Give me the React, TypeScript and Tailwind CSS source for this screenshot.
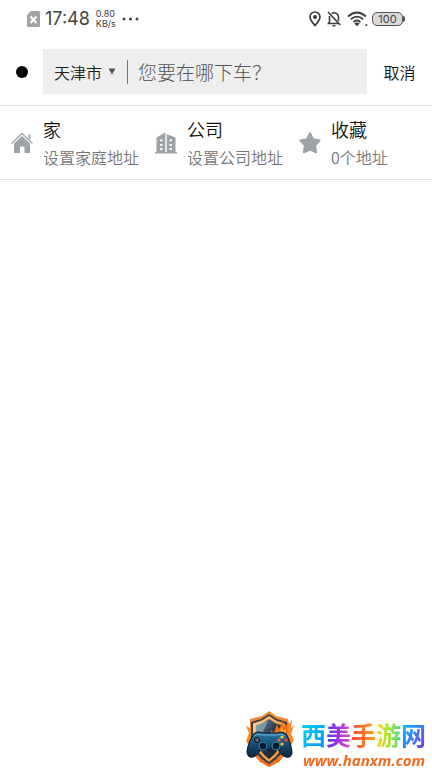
import React from 'react';

const cjk = "font-['Noto_Sans_CJK_SC',sans-serif]";

function StatusBar() {
  return (
    <header className="flex h-[38px] items-center justify-between pl-[27px] pr-[27px] text-[#444]">
      <div className="flex items-center">
        <svg width="13" height="16" viewBox="0 0 13 16" aria-hidden="true">
          <path d="M4 0H11.5Q13 0 13 1.5V14.5Q13 16 11.5 16H1.5Q0 16 0 14.5V4Z" fill="#a3a3a3" />
          <path d="M3.500 5.500L9.500 12M9.500 5.500L3.500 12" stroke="#fff" strokeWidth="2" />
        </svg>
        <span className="ml-[5px] font-['Inter',sans-serif] text-[18px] leading-5">17:48</span>
        <span className="ml-[6px] flex flex-col font-['Inter',sans-serif] text-[9px] leading-[10px]">
          <span>0.80</span>
          <span>KB/s</span>
        </span>
        <svg className="ml-[6px]" width="17" height="4" viewBox="0 0 17 4" fill="#444" aria-hidden="true">
          <circle cx="2" cy="2" r="1.5" />
          <circle cx="8.5" cy="2" r="1.5" />
          <circle cx="15" cy="2" r="1.5" />
        </svg>
      </div>
      <div className="flex items-center">
        <svg width="12" height="16" viewBox="0 0 12 16" fill="none" aria-hidden="true">
          <path d="M6 14.5C3.5 11.5 1 9 1 6A5 5 0 0 1 11 6C11 9 8.500 11.500 6 14.500Z" stroke="#3c3c3c" strokeWidth="1.7" />
          <circle cx="6" cy="6" r="2" fill="#3c3c3c" />
        </svg>
        <svg className="ml-[6px]" width="14" height="16" viewBox="0 0 14 16" fill="none" stroke="#3c3c3c" strokeWidth="1.6" aria-hidden="true">
          <path d="M4.500 2.500C8 .5 11.500 3 11.500 6V10M2.500 5V11L1.500 12.500H11M5.500 14.700H8.500M1 1L13.300 14" />
        </svg>
        <svg className="ml-[6px]" width="21" height="16" viewBox="0 0 21 16" fill="none" stroke="#3c3c3c" strokeWidth="1.8" aria-hidden="true">
          <path d="M1 5.500Q10 -2.500 19 5.500M3.800 8.300Q10 3 16.200 8.300M6.500 11Q10 8 13.500 11" />
          <path d="M7.300 12.500Q10 10.500 12.700 12.500L10 15.200Z" fill="#3c3c3c" stroke="none" />
          <circle cx="19.300" cy="14" r="1" fill="#3c3c3c" stroke="none" />
        </svg>
        <span className="ml-[4px] flex h-[14px] w-[31px] items-center justify-center rounded-[5px] border border-[#555] bg-[#d9d9d9] font-['Inter',sans-serif] text-[11px] leading-3">
          100
        </span>
        <span className="h-[6px] w-[2px] rounded-r-sm bg-[#555]" />
      </div>
    </header>
  );
}

function SearchBar() {
  return (
    <form className="flex items-center border-b border-[#e2e2e2] pt-[11px] pb-[11px]">
      <span className="flex w-[43px] shrink-0 justify-center">
        <span className="size-3 rounded-full bg-black" />
      </span>
      <div className="flex h-[45px] min-w-0 flex-1 items-center bg-[#eee] pl-[11px]">
        <label className="flex shrink-0 items-center">
          <select aria-label="城市" className="w-[54px] appearance-none bg-transparent text-[16px] leading-6 font-[350] text-[#222] outline-none">
            <option>天津市</option>
          </select>
          <svg width="8" height="7" viewBox="0 0 8 7" aria-hidden="true">
            <path d="M0.500 0.500H7.500L4 6.500Z" fill="#555" />
          </svg>
        </label>
        <span className="ml-[11px] h-6 w-px shrink-0 bg-[#777]" />
        <input
          type="text"
          aria-label="目的地"
          placeholder="您要在哪下车？"
          className="ml-[10px] min-w-0 flex-1 bg-transparent text-[19px] leading-7 font-light text-[#333] outline-none placeholder:text-[#555]"
        />
      </div>
      <button type="button" className="w-[65px] shrink-0 text-[16px] leading-6 font-[350] text-[#111]">
        取消
      </button>
    </form>
  );
}

function HomeIcon() {
  return (
    <svg width="22" height="22" viewBox="0 0 22 22" aria-hidden="true">
      <path d="M0.500 11.500L11 1.500L21.500 11.500" fill="none" stroke="#9da3a8" strokeWidth="1.300" />
      <path d="M17.500 2.500H19.500V8L17.500 6Z" fill="#9da3a8" />
      <path d="M3 11.500L11 4L19 11.500V20.500Q19 21 18.500 21H13.500V15.500Q13.500 14.500 12.500 14.500H10Q9 14.500 9 15.500V21H3.500Q3 21 3 20.500Z" fill="#9da3a8" />
    </svg>
  );
}

function OfficeIcon() {
  return (
    <svg width="22" height="22" viewBox="0 0 22 22" aria-hidden="true">
      <path d="M0 20H1.500V5.500L10.300 0.500V20H11.700V2L20.500 5.500V20H22V21.500H0Z" fill="#9da3a8" />
      <path d="M5 7.500H7.500V9.200H5ZM5 12H7.500V13.700H5ZM5 16.200H7.500V17.900H5ZM14.500 7.500H17V9.200H14.500ZM14.500 12H17V13.700H14.500ZM14.500 16.200H17V17.900H14.500Z" fill="#fff" />
    </svg>
  );
}

function StarIcon() {
  return (
    <svg width="22" height="22" viewBox="0 0 22 22" aria-hidden="true">
      <path
        d="M11 1.500L14 7.300L20.500 8.500L16 13.500L17 20.200L11 17.500L5 20.200L6 13.500L1.500 8.500L8 7.300Z"
        fill="#9da3a8"
        stroke="#9da3a8"
        strokeWidth="2.200"
        strokeLinejoin="round"
      />
    </svg>
  );
}

const places = [
  { title: '家', note: '设置家庭地址', icon: <HomeIcon /> },
  { title: '公司', note: '设置公司地址', icon: <OfficeIcon /> },
  { title: '收藏', note: '0个地址', icon: <StarIcon /> },
];

function Places() {
  return (
    <nav className="grid grid-cols-3 border-b border-[#e2e2e2]">
      {places.map((place) => (
        <button key={place.title} type="button" className="flex h-[73px] items-center pl-[11px] text-left">
          {place.icon}
          <span className="ml-[10px] flex flex-col whitespace-nowrap">
            <span className="text-[18px] leading-7 font-[350] text-[#111]">{place.title}</span>
            <span className="text-[16px] leading-7 font-[350] text-[#777]">{place.note}</span>
          </span>
        </button>
      ))}
    </nav>
  );
}

function ShieldLogo() {
  return (
    <svg width="50" height="58" viewBox="0 0 50 58" aria-hidden="true">
      <defs>
        <linearGradient id="flame" x1="0" y1="0" x2="0" y2="1">
          <stop offset="0" stopColor="#e98a35" />
          <stop offset="0.500" stopColor="#ff8a24" />
          <stop offset="1" stopColor="#f36a18" />
        </linearGradient>
        <linearGradient id="rim" x1="0" y1="0" x2="1" y2="1">
          <stop offset="0" stopColor="#ffd49a" />
          <stop offset="0.500" stopColor="#f7a04a" />
          <stop offset="1" stopColor="#ff9d2e" />
        </linearGradient>
        <linearGradient id="steel" x1="0" y1="0" x2="1" y2="1">
          <stop offset="0" stopColor="#7593a6" />
          <stop offset="0.500" stopColor="#22384a" />
          <stop offset="1" stopColor="#0d1622" />
        </linearGradient>
        <linearGradient id="pad" x1="0" y1="0" x2="0" y2="1">
          <stop offset="0" stopColor="#2d7fac" />
          <stop offset="0.500" stopColor="#174b70" />
          <stop offset="1" stopColor="#0c2440" />
        </linearGradient>
      </defs>
      <path d="M24 1L31 6L43 9L44 14L47 10L46 18L49 15L46 24L49 30L45 37L46 42L39 46L34 52L24 57L15 52L10 46L3 43L5 37L1 31L4 23L1 16L5 18L5 9L17 6Z" fill="url(#flame)" />
      <path d="M24 4L32 9L42 12V29Q40 45 24 54Q8 45 6 29V12L16 9Z" fill="#3a3f45" />
      <path d="M24 6L31 10.500L40 13.500V29Q37 43 24 52Q11 43 8 29V13.500L17 10.500Z" fill="url(#rim)" />
      <path d="M24 9L30 13L37 15.500V29Q35 41 24 49Q13 41 11 29V15.500L18 13Z" fill="url(#steel)" />
      <path d="M11 16L23 11L15 28H11Z" fill="#9ab5c2" opacity=".6" />
      <path d="M25 27L26 20L29 23L32 14L34 19L38 11L39 17L43 13L42 28Z" fill="#f9680d" />
      <path d="M30 27L32 21L34 24L37 16L38 21L41 19L40 28Z" fill="#ffbe3b" />
      <path d="M9 24Q12 21 17 23H32Q37 21 41 24Q46 32 47 43Q46 48 41 47Q37 46 33 39H16Q12 46 8 47Q3 48 2 42Q3 32 9 24Z" fill="url(#pad)" stroke="#0c1e30" strokeWidth="1.200" />
      <path d="M9 26Q12 23 17 25H32Q37 23 40 26" fill="none" stroke="#5fb0d6" />
      <path d="M9 30H15M12 27V33" stroke="#0b2034" strokeWidth="3" />
      <path d="M10 30H14M12 28V32" stroke="#8a7f84" strokeWidth="1.200" />
      <circle cx="18" cy="36" r="4" fill="#081a2b" stroke="#3b83ad" />
      <circle cx="31" cy="36" r="4" fill="#081a2b" stroke="#3b83ad" />
      <circle cx="37" cy="27" r="1.600" fill="#ffca2b" />
      <circle cx="41" cy="30" r="1.600" fill="#f44336" />
      <circle cx="34" cy="30" r="1.600" fill="#ff6a3a" />
      <circle cx="37" cy="34" r="1.600" fill="#ffca2b" />
    </svg>
  );
}

function Watermark() {
  return (
    <aside className="fixed right-[6px] bottom-0 flex items-end">
      <ShieldLogo />
      <span className="ml-[6px] flex flex-col">
        <span className="flex text-[25px] leading-9 font-bold">
          <span className="bg-linear-to-br from-[#13e4ee] to-[#1685ff] bg-clip-text text-transparent">西</span>
          <span className="bg-linear-to-r from-[#4a38f0] via-[#a02ce8] to-[#f044b8] bg-clip-text text-transparent">美</span>
          <span className="bg-linear-to-r from-[#ff3e3c] to-[#ff9c18] bg-clip-text text-transparent">手</span>
          <span className="bg-linear-to-r from-[#ffd21a] via-[#a5e52a] to-[#2adc78] bg-clip-text text-transparent">游</span>
          <span className="bg-linear-to-br from-[#12dff0] via-[#2a80ff] to-[#7a16d8] bg-clip-text text-transparent">网</span>
        </span>
        <a href="#" className="ml-[2px] font-['Open_Sans',sans-serif] text-[15px] leading-4 font-bold text-[#f26a21] italic">
          www.hanxm.com
        </a>
      </span>
    </aside>
  );
}

export default function App() {
  return (
    <main className={`min-h-screen bg-white ${cjk}`}>
      <StatusBar />
      <SearchBar />
      <Places />
      <Watermark />
    </main>
  );
}
